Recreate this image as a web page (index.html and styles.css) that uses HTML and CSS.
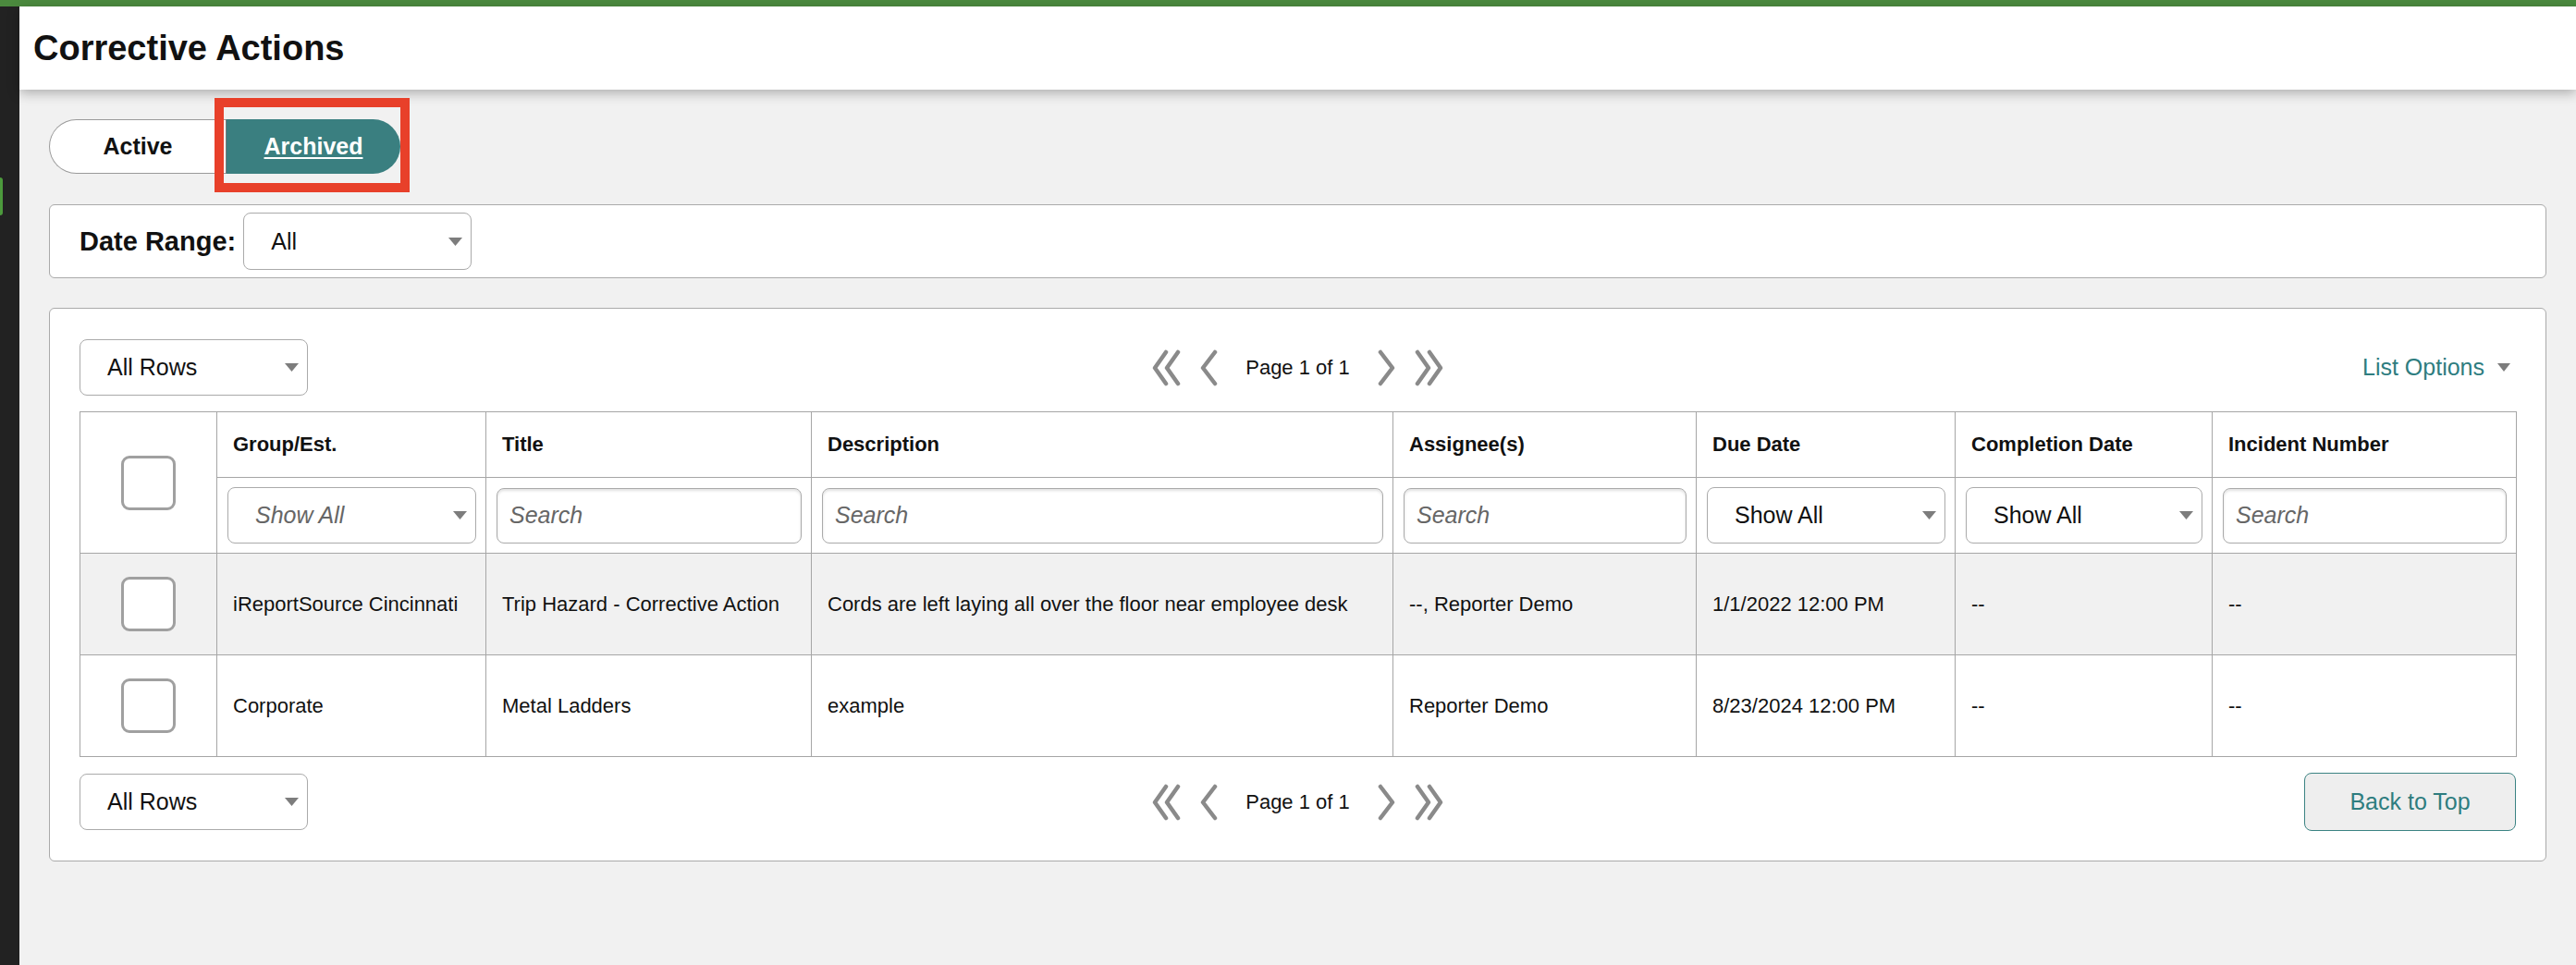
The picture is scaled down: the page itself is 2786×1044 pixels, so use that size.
FILE: index.html
```html
<!DOCTYPE html>
<html lang="en">
<head>
    <meta charset="UTF-8">
    <meta name="viewport" content="width=device-width, initial-scale=1.0">
    <title>Corrective Actions</title>
    <link rel="stylesheet" href="styles.css">
</head>
<body>
    <div class="top-bar"></div>
    <div class="layout">
        <div class="sidebar">
            <div class="sidebar-mark"></div>
        </div>

        <div class="main">
            <div class="page-header">
                <h1>Corrective Actions</h1>
            </div>

            <div class="content">
                <div class="tabs">
                    <div class="tab">Active</div>
                    <div class="tab tab-selected">
                        <a href="#">Archived</a>
                        <span class="highlight"></span>
                    </div>
                </div>

                <div class="card filter-card">
                    <span class="filter-label">Date Range:</span>
                    <div class="select date-select">
                        <span>All</span>
                        <svg class="caret" viewBox="0 0 15 9" width="15" height="9"><polygon points="0,0 15,0 7.5,9"/></svg>
                    </div>
                </div>

                <div class="card list-card">
                    <div class="list-toolbar">
                        <div class="select rows-select">
                            <span>All Rows</span>
                            <svg class="caret" viewBox="0 0 15 9" width="15" height="9"><polygon points="0,0 15,0 7.5,9"/></svg>
                        </div>
                        <div class="pager">
                            <svg class="pager-icon" viewBox="0 0 32 40" width="32" height="40"><polyline points="15,3 3,20 15,37"/><polyline points="28,3 16,20 28,37"/></svg>
                            <svg class="pager-icon" viewBox="0 0 20 40" width="20" height="40"><polyline points="17,3 4,20 17,37"/></svg>
                            <span class="pager-text">Page 1 of 1</span>
                            <svg class="pager-icon" viewBox="0 0 20 40" width="20" height="40"><polyline points="3,3 16,20 3,37"/></svg>
                            <svg class="pager-icon" viewBox="0 0 32 40" width="32" height="40"><polyline points="4,3 16,20 4,37"/><polyline points="17,3 29,20 17,37"/></svg>
                        </div>
                        <div class="toolbar-right">
                            <a href="#" class="list-options">List Options</a>
                            <svg class="caret" viewBox="0 0 14 9" width="14" height="9"><polygon points="0,0 14,0 7,9"/></svg>
                        </div>
                    </div>

                    <table class="grid">
                        <colgroup>
                            <col style="width: 148px">
                            <col style="width: 291px">
                            <col style="width: 352px">
                            <col style="width: 629px">
                            <col style="width: 328px">
                            <col style="width: 280px">
                            <col style="width: 278px">
                            <col style="width: 329px">
                        </colgroup>
                        <thead>
                            <tr class="head-row">
                                <th rowspan="2" class="check-cell"><div class="checkbox"></div></th>
                                <th>Group/Est.</th>
                                <th>Title</th>
                                <th>Description</th>
                                <th>Assignee(s)</th>
                                <th>Due Date</th>
                                <th>Completion Date</th>
                                <th>Incident Number</th>
                            </tr>
                            <tr class="filter-row">
                                <td>
                                    <div class="select cell-select placeholder">
                                        <span>Show All</span>
                                        <svg class="caret" viewBox="0 0 15 9" width="15" height="9"><polygon points="0,0 15,0 7.5,9"/></svg>
                                    </div>
                                </td>
                                <td><input type="text" class="search" placeholder="Search"></td>
                                <td><input type="text" class="search" placeholder="Search"></td>
                                <td><input type="text" class="search" placeholder="Search"></td>
                                <td>
                                    <div class="select cell-select">
                                        <span>Show All</span>
                                        <svg class="caret" viewBox="0 0 15 9" width="15" height="9"><polygon points="0,0 15,0 7.5,9"/></svg>
                                    </div>
                                </td>
                                <td>
                                    <div class="select cell-select">
                                        <span>Show All</span>
                                        <svg class="caret" viewBox="0 0 15 9" width="15" height="9"><polygon points="0,0 15,0 7.5,9"/></svg>
                                    </div>
                                </td>
                                <td><input type="text" class="search" placeholder="Search"></td>
                            </tr>
                        </thead>
                        <tbody>
                            <tr class="shaded">
                                <td class="check-cell"><div class="checkbox"></div></td>
                                <td>iReportSource Cincinnati</td>
                                <td>Trip Hazard - Corrective Action</td>
                                <td>Cords are left laying all over the floor near employee desk</td>
                                <td>--, Reporter Demo</td>
                                <td>1/1/2022 12:00 PM</td>
                                <td>--</td>
                                <td>--</td>
                            </tr>
                            <tr>
                                <td class="check-cell"><div class="checkbox"></div></td>
                                <td>Corporate</td>
                                <td>Metal Ladders</td>
                                <td>example</td>
                                <td>Reporter Demo</td>
                                <td>8/23/2024 12:00 PM</td>
                                <td>--</td>
                                <td>--</td>
                            </tr>
                        </tbody>
                    </table>

                    <div class="list-toolbar bottom-toolbar">
                        <div class="select rows-select">
                            <span>All Rows</span>
                            <svg class="caret" viewBox="0 0 15 9" width="15" height="9"><polygon points="0,0 15,0 7.5,9"/></svg>
                        </div>
                        <div class="pager">
                            <svg class="pager-icon" viewBox="0 0 32 40" width="32" height="40"><polyline points="15,3 3,20 15,37"/><polyline points="28,3 16,20 28,37"/></svg>
                            <svg class="pager-icon" viewBox="0 0 20 40" width="20" height="40"><polyline points="17,3 4,20 17,37"/></svg>
                            <span class="pager-text">Page 1 of 1</span>
                            <svg class="pager-icon" viewBox="0 0 20 40" width="20" height="40"><polyline points="3,3 16,20 3,37"/></svg>
                            <svg class="pager-icon" viewBox="0 0 32 40" width="32" height="40"><polyline points="4,3 16,20 4,37"/><polyline points="17,3 29,20 17,37"/></svg>
                        </div>
                        <div class="toolbar-right">
                            <button type="button" class="back-top">Back to Top</button>
                        </div>
                    </div>
                </div>
            </div>
        </div>
    </div>
</body>
</html>
```

FILE: styles.css
```css
html, body {
    height: 100%;
}
body {
    margin: 0;
    font-family: "Liberation Sans", Arial, Helvetica, sans-serif;
    background-color: #f1f1f1;
    color: #111;
    overflow: hidden;
}
.top-bar {
    height: 7px;
    background-color: #4b8a3e;
}
.layout {
    display: flex;
    min-height: calc(100vh - 7px);
}
.sidebar {
    width: 21px;
    flex-shrink: 0;
    background-color: #222;
}
.sidebar-mark {
    margin-top: 185px;
    width: 3px;
    height: 41px;
    background-color: #4c9a3c;
    border-radius: 0 3px 3px 0;
}
.main {
    flex: 1;
    min-width: 0;
}
.page-header {
    position: relative;
    height: 90px;
    display: flex;
    align-items: center;
    padding-left: 15px;
    background-color: white;
    box-shadow: 0 4px 12px rgba(0, 0, 0, 0.28);
}
.page-header h1 {
    margin: 0;
    font-size: 38px;
    font-weight: bold;
    color: #111;
}
.content {
    padding: 32px 32px 0 32px;
}

/* Active / Archived toggle */
.tabs {
    display: flex;
    height: 59px;
}
.tab {
    width: 191px;
    display: flex;
    align-items: center;
    justify-content: center;
    box-sizing: border-box;
    font-size: 25px;
    font-weight: bold;
    background-color: white;
    border: 1px solid #9a9a9a;
    border-right: none;
    border-radius: 30px 0 0 30px;
}
.tab-selected {
    position: relative;
    width: 189px;
    background-color: #3a7f80;
    border: none;
    border-left: 1px solid #7a7a7a;
    border-radius: 0 30px 30px 0;
}
.tab-selected a {
    color: white;
    text-decoration: underline;
    text-underline-offset: 3px;
}
.highlight {
    position: absolute;
    left: -13px;
    top: -23px;
    width: 211px;
    height: 102px;
    box-sizing: border-box;
    border: 10px solid #e8402a;
}

/* Cards */
.card {
    background-color: white;
    border: 1px solid #aaa;
    border-radius: 6px;
}
.filter-card {
    margin-top: 33px;
    height: 80px;
    box-sizing: border-box;
    display: flex;
    align-items: center;
    padding: 0 32px;
}
.filter-label {
    font-size: 29px;
    font-weight: bold;
    margin-right: 8px;
}
.list-card {
    margin-top: 32px;
    padding: 33px 32px 32px 32px;
}

/* Select boxes */
.select {
    display: flex;
    align-items: center;
    justify-content: space-between;
    box-sizing: border-box;
    background-color: white;
    border: 1px solid #aaa;
    border-radius: 8px;
    font-size: 25px;
    padding: 0 9px 0 29px;
    color: #111;
}
.caret {
    fill: #7d7d7d;
    flex-shrink: 0;
}
.date-select {
    width: 247px;
    height: 62px;
}
.rows-select {
    width: 247px;
    height: 61px;
}
.cell-select {
    width: 100%;
    height: 61px;
}
.placeholder span {
    font-style: italic;
    color: #666;
}

/* Toolbars */
.list-toolbar {
    display: grid;
    grid-template-columns: 1fr auto 1fr;
    align-items: center;
}
.bottom-toolbar {
    margin-top: 17px;
}
.pager {
    display: flex;
    align-items: center;
    gap: 19px;
}
.pager-icon {
    fill: none;
    stroke: #8a8a8a;
    stroke-width: 4.5;
    stroke-linecap: round;
    stroke-linejoin: round;
}
.pager-text {
    font-size: 22px;
    margin: 0 11px;
}
.toolbar-right {
    display: flex;
    align-items: center;
    justify-content: flex-end;
    gap: 14px;
    padding-right: 6px;
}
.list-options {
    font-size: 25px;
    color: #2e7d7f;
    text-decoration: none;
}
.bottom-toolbar .toolbar-right {
    padding-right: 0;
}
.back-top {
    width: 229px;
    height: 63px;
    font-family: inherit;
    font-size: 25px;
    color: #2e7d7f;
    background-color: #eeeeee;
    border: 1px solid #3b8383;
    border-radius: 8px;
    cursor: pointer;
}

/* Table */
.grid {
    width: 100%;
    table-layout: fixed;
    border-collapse: collapse;
    margin-top: 17px;
    font-size: 22px;
}
.grid th,
.grid td {
    border: 1px solid #a6a6a6;
    padding: 0 17px;
    text-align: left;
    vertical-align: middle;
    white-space: nowrap;
    overflow: hidden;
}
.grid th {
    font-weight: bold;
    color: #111;
}
.head-row {
    height: 71px;
}
.filter-row {
    height: 82px;
}
.filter-row td {
    padding: 0 10px 0 11px;
}
.grid tbody tr {
    height: 110px;
}
.grid tbody tr.shaded {
    background-color: #f1f1f1;
}
.grid .check-cell {
    padding: 0;
}
.checkbox {
    width: 59px;
    height: 59px;
    margin: 0 auto;
    box-sizing: border-box;
    background-color: white;
    border: 3px solid #a0a0a0;
    border-radius: 9px;
}
.search {
    width: 100%;
    height: 60px;
    box-sizing: border-box;
    padding: 0 13px;
    font-family: inherit;
    font-size: 25px;
    border: 1px solid #aaa;
    border-radius: 8px;
    box-shadow: inset 0 2px 3px rgba(0, 0, 0, 0.12);
    background-color: white;
}
.search::placeholder {
    font-style: italic;
    color: #666;
}
```
